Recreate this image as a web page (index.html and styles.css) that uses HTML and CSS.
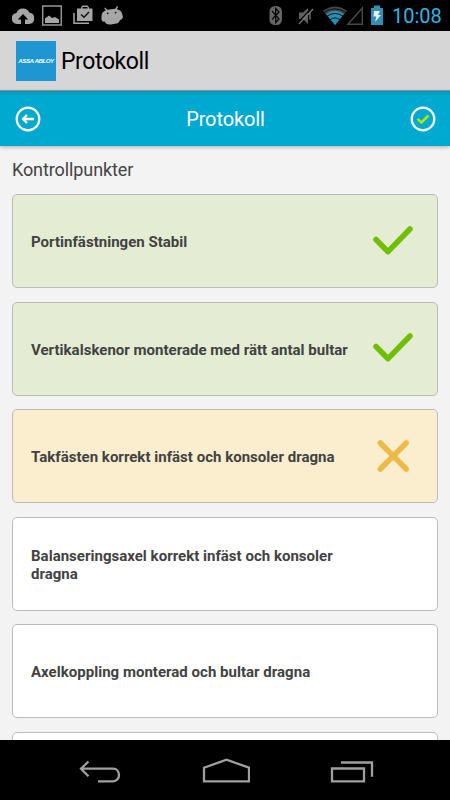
FILE: index.html
```html
<!DOCTYPE html>
<html lang="sv">
<head>
<meta charset="utf-8">
<title>Protokoll</title>
<link rel="stylesheet" href="styles.css">
</head>
<body>
<div class="screen">
  <header class="status">
    <div class="status-left">
      <svg width="24" height="31" viewBox="0 0 24 31"><path fill="#a6a6a6" d="M6 24a5.500 5.500 0 0 1-.6-10.900A7 7 0 0 1 18.300 12.500A5.800 5.800 0 0 1 18 24h-4v-4.500h3.200L12 14l-5.200 5.500H10V24z"/></svg>
      <svg width="20" height="31" viewBox="0 0 20 31"><rect x=".7" y="6" width="18.600" height="19" fill="none" stroke="#969696" stroke-width="1.500"/><path fill="#a6a6a6" d="M3 23v-4.500l4-3 3 2.500 3-1 4 2.500V23z"/></svg>
      <svg width="20" height="31" viewBox="0 0 20 31"><path d="M1 13v10.300h15" fill="none" stroke="#a6a6a6" stroke-width="1.500"/><path fill="#a6a6a6" fill-rule="evenodd" d="M4 8.500h4V7.500L9.500 5.500h5L16 7.500v1h3.500V21H4zM9.500 8.500h5V7h-5z"/><path d="M8 14.500l3 2.800 5-5.300" fill="none" stroke="#111" stroke-width="1.500"/></svg>
      <svg width="22" height="31" viewBox="0 0 22 31"><g transform="rotate(-6 11 16)"><path fill="#a6a6a6" d="M.5 16c0-3.500 2-5.500 5-6.300L4 7.500l1-.8 2 2.500h8l2-2.500 1 .8-1.500 2.200c3 1 5 2.800 5 6.300 1 3-1 5-3 4.800-1 3.200-4 3.400-8 3.400s-6.500-.2-7.500-3.400C1 21-.5 19 .5 16z"/><circle cx="7" cy="13" r=".9" fill="#111"/><circle cx="15" cy="13" r=".9" fill="#111"/></g></svg>
    </div>
    <div class="status-right">
      <svg width="14" height="31" viewBox="0 0 14 31"><rect x=".5" y="6" width="12.500" height="19" rx="5.500" fill="#666"/><path d="M3 11l7 8-3.300 3.500V8.500L10 12l-7 7.500" fill="none" stroke="#080808" stroke-width="1.300"/></svg>
      <svg width="16" height="31" viewBox="0 0 16 31"><path fill="#606060" d="M1 12.500h4l5-4.500v16l-5-5H1z"/><path d="M12 11.500v8M1 24L15 9" stroke="#777" stroke-width="1.300"/><path d="M0 22.500L14 7.500" stroke="#000" stroke-width="1.100"/></svg>
      <svg width="26" height="31" viewBox="0 0 26 31"><path fill="#454545" d="M1 10.800Q13 2 25 10.800L13 25z"/><path fill="#258fb5" d="M4 14q9-6.500 18 0l-9 11z"/><path d="M1.500 12.800q11.500-8 23 0M5 16.200q8-5.500 16 0M8 19.700q5-3.500 10 0" fill="none" stroke="#111" stroke-width="1"/></svg>
      <svg width="18" height="31" viewBox="0 0 18 31"><path d="M2 24.300L16.300 8v16.300z" fill="none" stroke="#484848" stroke-width="1.500"/></svg>
      <svg width="14" height="31" viewBox="0 0 14 31"><path fill="#318fb1" d="M1 8h3V5.500h6V8h3v17H1z"/><path fill="#e5edf0" d="M4 11h6l-2 4h3l-6 7 1.300-5.500H3.500z"/></svg>
      <span class="clock">10:08</span>
    </div>
  </header>
  <div class="appbar">
    <div class="logo"><span>ASSA ABLOY</span></div>
    <h1>Protokoll</h1>
  </div>
  <div class="toolbar">
    <svg width="26" height="26" viewBox="0 0 26 26" fill="none" stroke="#fff" stroke-width="2.200"><circle cx="13" cy="13" r="11.300"/><path d="M19 13H8M12 9l-4 4 4 4" stroke-width="2.300"/></svg>
    <h2>Protokoll</h2>
    <svg width="26" height="26" viewBox="0 0 26 26" fill="none" stroke="#fff" stroke-width="2.200"><circle cx="13" cy="13" r="11.300"/><path d="M7.500 12.800l3.900 3.700 7.100-7" stroke="#b2e600" stroke-width="2.500"/></svg>
  </div>
  <main class="content">
    <h3>Kontrollpunkter</h3>
    <div class="list">
      <div class="card ok"><p>Portinfästningen Stabil</p><svg width="42" height="32" viewBox="0 0 42 32"><path d="M4 15.500l12 12.200L38 5"/></svg></div>
      <div class="card ok"><p>Vertikalskenor monterade med rätt antal bultar</p><svg width="42" height="32" viewBox="0 0 42 32"><path d="M4 15.500l12 12.200L38 5"/></svg></div>
      <div class="card bad"><p>Takfästen korrekt infäst och konsoler dragna</p><svg width="42" height="34" viewBox="0 0 42 34"><path d="M8.300 4L34.200 30M34.200 4L8.300 30"/></svg></div>
      <div class="card"><p>Balanseringsaxel korrekt infäst och konsoler dragna</p></div>
      <div class="card"><p>Axelkoppling monterad och bultar dragna</p></div>
      <div class="card"></div>
    </div>
  </main>
  <nav class="navbar">
    <svg width="44" height="24" viewBox="0 0 44 24"><path d="M3 8.700h32c8 0 8 12.600 0 12.600H20M10.500 1.500L3 8.700l7.500 7.500"/></svg>
    <svg width="48" height="26" viewBox="0 0 48 26"><path d="M2 23.300V9.700L24.500 1.700 47 9.700v13.600z"/></svg>
    <svg width="44" height="24" viewBox="0 0 44 24"><path d="M2 8.500h32v12.800H2zM11 2.500h31v14.300"/></svg>
  </nav>
</div>
</body>
</html>
```

FILE: styles.css
```css
* { box-sizing: border-box; }
body { margin: 0; font-family: Roboto, "Liberation Sans", sans-serif; }
h1, h2, h3, p { margin: 0; font-weight: 400; }
svg { display: block; flex: none; }
.screen { width: 450px; height: 800px; display: flex; flex-direction: column; overflow: hidden; background: #f3f3f3; }
.status { height: 31px; flex: none; background: #000; display: flex; justify-content: space-between; padding: 0 8px 0 11px; }
.status-left { display: flex; gap: 9px; }
.status-left svg:first-child { margin-right: -2px; }
.status-left svg:nth-child(2) { margin-right: 2px; }
.status-left svg:nth-child(3) { margin-right: -1px; }
.status-right { display: flex; }
.status-right svg:nth-child(1) { margin-right: 15px; }
.status-right svg:nth-child(2) { margin-right: 8px; }
.status-right svg:nth-child(3) { margin-right: -2px; }
.status-right svg:nth-child(4) { margin-right: 6px; }
.clock { width: 50px; margin-left: 8px; color: #33b5e5; font-size: 20px; line-height: 32px; white-space: nowrap; }
.appbar { height: 60px; flex: none; display: flex; align-items: center; gap: 5px; padding: 0 16px; background: #d6d6d6; box-shadow: inset 0 -1px #999; }
.logo { width: 40px; height: 40px; background: #1e96d1; color: #fff; display: flex; align-items: center; justify-content: center; font: italic 700 6.200px/1 "Liberation Sans", sans-serif; white-space: nowrap; letter-spacing: -.45px; }
h1 { font-size: 23px; line-height: 40px; padding-top: 2px; letter-spacing: -.4px; color: #000; }
.toolbar { position: relative; height: 55px; flex: none; display: flex; align-items: center; justify-content: space-between; padding: 0 14px 0 15px; background: linear-gradient(#0397b9, #00a9d0 5px); box-shadow: 0 1px 4px rgba(0,0,0,.3); }
h2 { font-size: 20px; line-height: 28px; letter-spacing: -.1px; color: #fff; }
.content { flex: 1; min-height: 0; overflow: hidden; padding: 11px 12px 0; }
h3 { font-size: 18px; line-height: 26px; letter-spacing: -.1px; color: #444; }
.list { display: flex; flex-direction: column; gap: 13.500px; margin-top: 11px; }
.card { height: 94px; flex: none; display: flex; align-items: center; justify-content: space-between; padding: 2px 23px 0 18px; background: #fff; border: 1px solid #bbb; border-radius: 5px; }
.card p { width: 325px; font-size: 15px; line-height: 18px; font-weight: 700; letter-spacing: .02px; color: #424242; }
.card svg { fill: none; stroke: #6fbe00; stroke-width: 5.500; stroke-linecap: round; stroke-linejoin: round; margin-top: -5px; }
.ok { background: #e4edd3; }
.bad { background: #fbeecf; }
.card.bad svg { stroke: #edb947; margin-top: -3px; }
.navbar { height: 60px; flex: none; display: flex; justify-content: space-between; padding: 19px 76px 0 78px; background: #000; }
.navbar svg { fill: none; stroke: #a0a0a0; stroke-width: 2.300; margin-top: 1px; }
.navbar svg:nth-child(2) { margin-top: -1px; }
```
